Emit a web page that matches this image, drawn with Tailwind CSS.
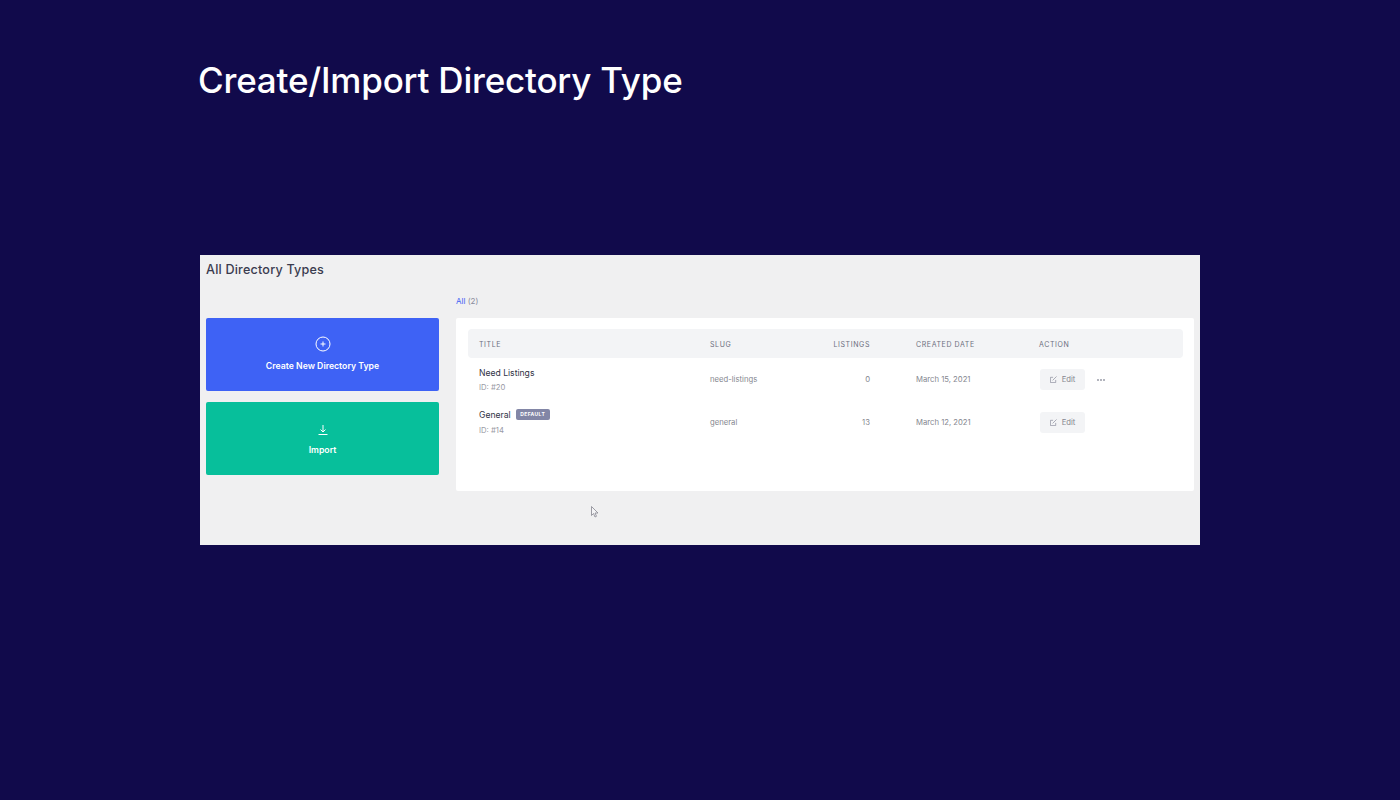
<!DOCTYPE html>
<html lang="en">
<head>
    <meta charset="UTF-8">
    <meta name="viewport" content="width=device-width, initial-scale=1.0">
    <title>Create/Import Directory Type</title>
    <script src="https://cdn.jsdelivr.net/npm/@tailwindcss/browser@4"></script>
</head>
<body class="bg-[#110a4b] h-[800px] overflow-hidden font-['Inter',sans-serif]">

    <h1 class="pl-[198px] pt-[58px] text-[35px] leading-[44px] tracking-[-0.2px] font-medium text-white">Create/Import Directory Type</h1>

    <!-- Screenshot panel -->
    <div class="mx-auto mt-[153px] w-[1000px] h-[290px] bg-[#f0f0f1] px-[6px] pt-[6px]">
        <h2 class="text-[12.6px] leading-[18px] font-medium text-[#3a3b4e] tracking-[0.2px]">All Directory Types</h2>

        <div class="flex gap-[17px] mt-[14px]">
            <!-- Left buttons -->
            <div class="w-[233px] pt-[25px] flex flex-col gap-[11px]">
                <div class="h-[73px] rounded-[2px] bg-[#3e62f5] flex flex-col items-center pt-[18px] text-white">
                    <svg width="16" height="16" viewBox="0 0 16 16" fill="none" stroke="currentColor" stroke-width="1">
                        <circle cx="8" cy="8" r="7"/>
                        <path d="M8 5.5v5M5.5 8h5"/>
                    </svg>
                    <span class="mt-[8px] text-[8.7px] leading-[12px] font-semibold">Create New Directory Type</span>
                </div>
                <div class="h-[73px] rounded-[2px] bg-[#07bf9b] flex flex-col items-center pt-[22px] text-white">
                    <svg width="12" height="12" viewBox="0 0 12 12" fill="none" stroke="currentColor" stroke-width="1">
                        <path d="M6 1v7M3.5 5.5 6 8l2.5-2.5M1.5 10.5h9"/>
                    </svg>
                    <span class="mt-[8px] text-[8.7px] leading-[12px] font-semibold">Import</span>
                </div>
            </div>

            <!-- Right table -->
            <div class="w-[738px]">
                <p class="text-[8px] leading-[12px] h-[25px] text-[#8a8c9c] pt-[2px]"><span class="text-[#3e62f5]">All</span> (2)</p>
                <div class="h-[173px] bg-white rounded-[2px] px-[12px] pt-[11px]">
                    <div class="grid grid-cols-[231px_100px_60px_169px_1fr] items-center h-[29px] w-[715px] pl-[11px] pt-[3px] bg-[#f3f4f6] rounded-[4px] text-[7px] tracking-[0.6px] text-[#6c6f7e]">
                        <span>TITLE</span>
                        <span>SLUG</span>
                        <span class="text-right">LISTINGS</span>
                        <span class="pl-[46px]">CREATED DATE</span>
                        <span>ACTION</span>
                    </div>

                    <div class="grid grid-cols-[231px_100px_60px_169px_1fr] items-center h-[43px] w-[715px] pl-[11px] text-[7.7px] text-[#85878f]">
                        <div>
                            <p class="text-[8.6px] leading-[12px] text-[#2f3244]">Need Listings</p>
                            <p class="mt-[3px] text-[7.7px] leading-[11px] text-[#999aa5]">ID: #20</p>
                        </div>
                        <span>need-listings</span>
                        <span class="text-right">0</span>
                        <span class="pl-[46px]">March 15, 2021</span>
                        <div class="flex items-center gap-[12px]">
                            <div class="w-[45px] h-[21px] ml-[1px] rounded-[3px] bg-[#f3f4f6] flex items-center justify-center gap-[5px]">
                                <svg width="7" height="7" viewBox="0 0 8 8" fill="none" stroke="#8a8c9c" stroke-width="0.8">
                                    <path d="M6.5 4.5V7.5H.5V1.5H3.5M3 5l4.5-4.5"/>
                                </svg>
                                <span>Edit</span>
                            </div>
                            <div class="flex gap-[1px]">
                                <i class="w-[2px] h-[2px] rounded-full bg-[#9a9ca8]"></i>
                                <i class="w-[2px] h-[2px] rounded-full bg-[#9a9ca8]"></i>
                                <i class="w-[2px] h-[2px] rounded-full bg-[#9a9ca8]"></i>
                            </div>
                        </div>
                    </div>

                    <div class="grid grid-cols-[231px_100px_60px_169px_1fr] items-center h-[43px] w-[715px] pl-[11px] text-[7.7px] text-[#85878f]">
                        <div class="-mt-[1px]">
                            <p class="text-[8.6px] leading-[12px] text-[#2f3244] flex items-center gap-[5px]">General
                                <span class="w-[34px] text-center h-[11px] rounded-[2px] bg-[#8286a6] text-white text-[5px] leading-[11px] font-bold tracking-[0.4px]">DEFAULT</span>
                            </p>
                            <p class="mt-[4px] text-[7.7px] leading-[11px] text-[#999aa5]">ID: #14</p>
                        </div>
                        <span>general</span>
                        <span class="text-right">13</span>
                        <span class="pl-[46px]">March 12, 2021</span>
                        <div class="w-[45px] h-[21px] ml-[1px] rounded-[3px] bg-[#f3f4f6] flex items-center justify-center gap-[5px]">
                            <svg width="7" height="7" viewBox="0 0 8 8" fill="none" stroke="#8a8c9c" stroke-width="0.8">
                                <path d="M6.5 4.5V7.5H.5V1.5H3.5M3 5l4.5-4.5"/>
                            </svg>
                            <span>Edit</span>
                        </div>
                    </div>
                </div>
                <!-- mouse pointer -->
                <svg class="ml-[135px] mt-[15px]" width="8" height="12" viewBox="0 0 8 12" fill="#f4f4f6" stroke="#85858f" stroke-width="0.8">
                    <path d="M.5.5v9l2-2 1.5 3.5 1.5-.7L4 7h3z"/>
                </svg>
            </div>
        </div>
    </div>

</body>
</html>
